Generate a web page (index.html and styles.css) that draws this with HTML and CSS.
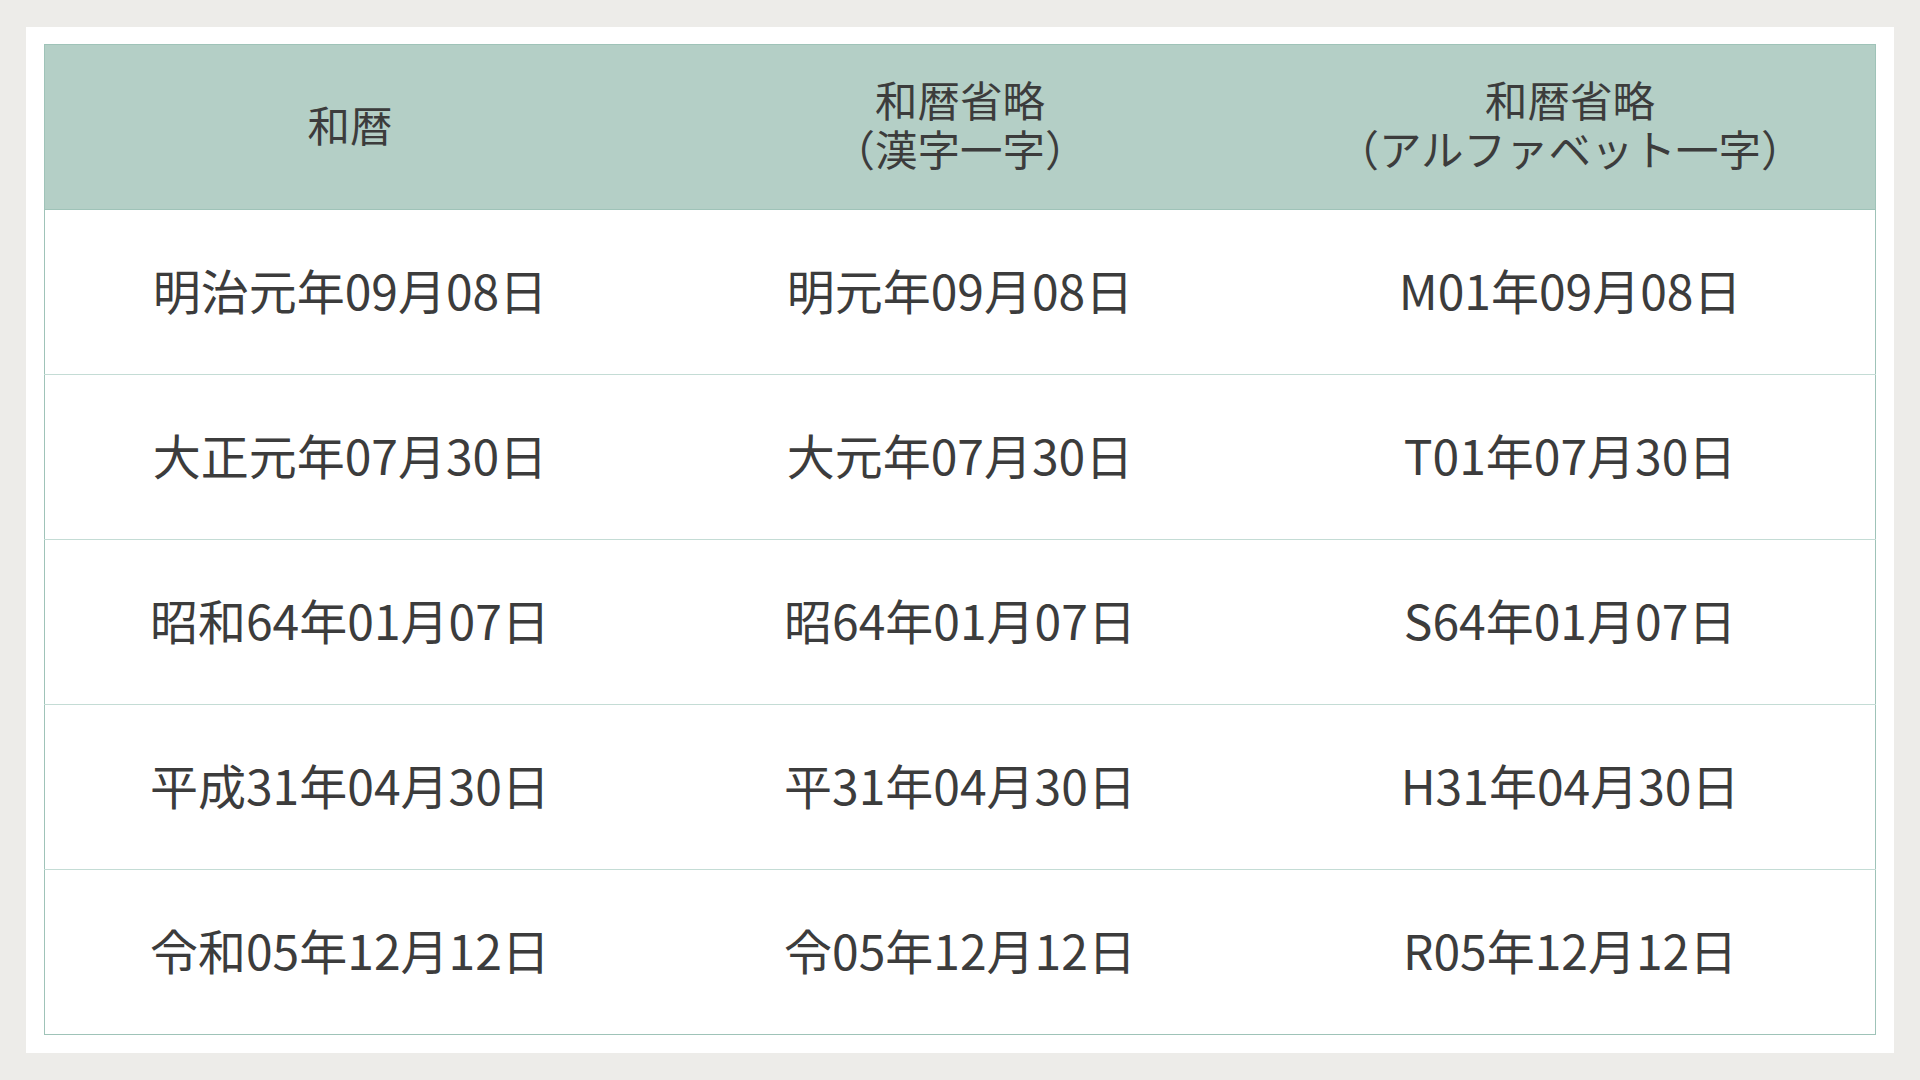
FILE: index.html
```html
<!DOCTYPE html>
<html lang="ja">
<head>
<meta charset="utf-8">
<link rel="stylesheet" href="styles.css">
</head>
<body>
<div class="card">
  <table class="era">
    <thead>
      <tr>
        <th>和暦</th>
        <th><span class="line">和暦省略</span><span class="line">（漢字一字）</span></th>
        <th><span class="line">和暦省略</span><span class="line">（アルファベット一字）</span></th>
      </tr>
    </thead>
    <tbody>
      <tr><td>明治元年09月08日</td><td>明元年09月08日</td><td>M01年09月08日</td></tr>
      <tr><td>大正元年07月30日</td><td>大元年07月30日</td><td>T01年07月30日</td></tr>
      <tr><td>昭和64年01月07日</td><td>昭64年01月07日</td><td>S64年01月07日</td></tr>
      <tr><td>平成31年04月30日</td><td>平31年04月30日</td><td>H31年04月30日</td></tr>
      <tr><td>令和05年12月12日</td><td>令05年12月12日</td><td>R05年12月12日</td></tr>
    </tbody>
  </table>
</div>
</body>
</html>
```

FILE: styles.css
```css
html, body {
  margin: 0;
  padding: 0;
  background: #edece9;
  width: 1920px;
  height: 1080px;
  overflow: hidden;
}
body {
  padding: 27px 26px 0 26px;
  box-sizing: border-box;
  font-family: "Noto Sans CJK JP", "Noto Sans", sans-serif;
  color: #3c3c3c;
}
.card {
  width: 1868px;
  height: 1026px;
  background: #ffffff;
  padding: 17px 18px 0 18px;
  box-sizing: border-box;
}
.era {
  width: 1832px;
  border-collapse: collapse;
  table-layout: fixed;
  border: 1px solid #9fc3b8;
}
.era th {
  height: 165px;
  box-sizing: border-box;
  background: #b4cfc6;
  font-weight: 400;
  font-size: 42.5px;
  line-height: 49px;
  text-align: center;
  vertical-align: middle;
  border-bottom: 1px solid #9fc3b8;
  padding: 0 0 8px 0;
}
.era th .line {
  display: block;
}
.era td {
  height: 165px;
  box-sizing: border-box;
  font-size: 48px;
  line-height: 60px;
  text-align: center;
  vertical-align: middle;
  border-top: 1px solid #c4dcd5;
  padding: 0 0 7px 0;
}
.era tbody tr:first-child td {
  border-top: none;
}
```
